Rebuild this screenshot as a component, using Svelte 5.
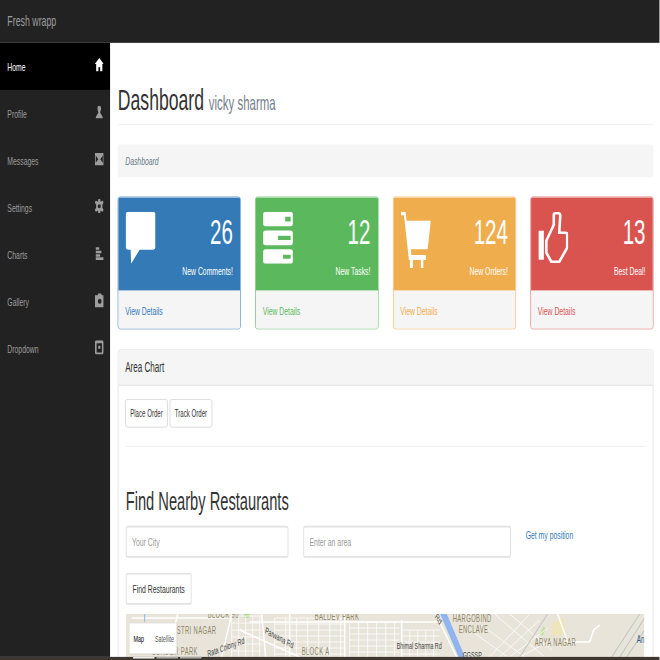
<script lang="ts">
  const nav = [
    { label: "Home", active: true, d: "M5 0 L10 6 H8.5 V13 H6 V9 H4 V13 H1.5 V6 H0 Z" },
    { label: "Profile", d: "M3 3 C3 0 7 0 7 3 C7 5 6.5 6 6 7 C6.5 9 9 10 9 13 H1 C1 10 3.5 9 4 7 C3.5 6 3 5 3 3 Z" },
    { label: "Messages", d: "M0 1 H10 V13 H0 Z M1 3.5 V10.5 L3.800 7 Z M9 3.5 L6.200 7 L9 10.500 Z" },
    { label: "Settings", d: "M4 0 H6 L6.5 2.5 L9 1.5 L10 3.5 L8.5 5.5 V8.5 L10 10.5 L9 12.5 L6.5 11.5 L6 14 H4 L3.5 11.5 L1 12.5 L0 10.5 L1.5 8.5 V5.5 L0 3.5 L1 1.5 L3.5 2.5 Z M5 5 A1.7 2 0 1 0 5 9 A1.7 2 0 1 0 5 5 Z" },
    { label: "Charts", d: "M1 1 H5 V3.5 H1 Z M1 4.5 H7.5 V7 H1 Z M1 8 H6 V10.5 H1 Z M1 11 H10 V13.5 H1 Z" },
    { label: "Gallery", d: "M3 2 L4 0 H7 L8 2 H10 V14 H0 V2 Z M5.5 5.5 A2 2.4 0 1 0 5.5 10.5 A2 2.4 0 1 0 5.5 5.5 Z" },
    { label: "Dropdown", d: "M2 0 H8 A2 2 0 0 1 10 2 V12 A2 2 0 0 1 8 14 H2 A2 2 0 0 1 0 12 V2 A2 2 0 0 1 2 0 Z M2 3 V12 H8 V3 Z M3.8 5.5 H6.2 V8.5 H3.8 Z" },
  ];

  const cards = [
    { tone: "blue", count: 26, text: "New Comments!" },
    { tone: "green", count: 12, text: "New Tasks!" },
    { tone: "yellow", count: 124, text: "New Orders!" },
    { tone: "red", count: 13, text: "Best Deal!" },
  ];

  // road grid, in screen px of the finished picture
  function grid(x0: number, x1: number, y0: number, y1: number, dx: number, dy: number) {
    let d = "";
    for (let x = x0; x <= x1; x += dx) d += `M${x} ${y0}V${y1}`;
    for (let y = y0; y <= y1; y += dy) d += `M${x0} ${y}H${x1}`;
    return d;
  }

  const thinRoads = [
    grid(232, 262, 616, 657, 7, 7),
    grid(275, 345, 618, 657, 11, 6),
    grid(350, 400, 622, 657, 9, 6),
    grid(402, 440, 630, 657, 8, 6),
    "M490 657L530 614M500 657L540 620M510 657L548 628M520 657L552 640M482 625L525 657M476 634L508 657M495 614L545 657M510 614L552 650",
  ].join("");

  const mainRoads = [
    "M132 618H230M178 614L168 657M232 614L222 657M262 614L266 657",
    "M240 630L300 657M290 614V657M345 614V657M402 620V657M250 622H440",
    "M436 614L457 657",
    "M558 614L568 642H590L594 630L600 625",
  ].join("");

  const labels = [
    { t: "BLOCK 90", x: 208, y: 618, cls: "place" },
    { t: "STRI NAGAR", x: 177, y: 634, cls: "place" },
    { t: "SUNDER PARK", x: 152, y: 655, cls: "place" },
    { t: "BALDEV PARK", x: 315, y: 620, cls: "place" },
    { t: "BLOCK A", x: 302, y: 655, cls: "place" },
    { t: "HARGOBIND", x: 453, y: 622, cls: "place" },
    { t: "ENCLAVE", x: 459, y: 633, cls: "place" },
    { t: "ARYA NAGAR", x: 535, y: 646, cls: "place" },
    { t: "Bhimal Sharma Rd", x: 397, y: 649, cls: "road" },
    { t: "Parwana Rd", x: 265, y: 633, rot: 18, cls: "road" },
    { t: "Rata Colony Rd", x: 208, y: 657, rot: -12, cls: "road" },
    { t: "Rd", x: 435, y: 617, rot: 45, cls: "road" },
    { t: "GGSSP", x: 463, y: 658, cls: "road" },
    { t: "Ana", x: 637, y: 643, cls: "transit" },
  ];
</script>

<div class="viewport">
  <div class="app">
    <header class="navbar">Fresh wrapp</header>

    <aside class="sidebar">
      {#each nav as item}
        <div class="nav-item" class:active={item.active}>
          <span>{item.label}</span>
          <svg class="nav-icon" viewBox="0 0 10 14" preserveAspectRatio="none">
            <path d={item.d} fill-rule="evenodd" fill="currentColor" />
          </svg>
        </div>
      {/each}
    </aside>

    <main class="wrapper">
      <div class="page-header">
        <h1>Dashboard <small>vicky sharma</small></h1>
      </div>
      <div class="breadcrumb">Dashboard</div>

      <div class="cards">
        {#each cards as card}
          <div class="card {card.tone}">
            <div class="card-body">
              {#if card.tone === "blue"}
                <svg class="card-icon" viewBox="0 0 30 52" preserveAspectRatio="none">
                  <path d="M3 0H27A3 3 0 0 1 30 3V35A3 3 0 0 1 27 38H14L5.5 52L5 38H3A3 3 0 0 1 0 35V3A3 3 0 0 1 3 0Z" />
                </svg>
              {:else if card.tone === "green"}
                <svg class="card-icon" viewBox="0 0 30 52" preserveAspectRatio="none">
                  <path
                    fill-rule="evenodd"
                    d="M2.5 0H27.5A2.5 2.5 0 0 1 30 2.500V12A2.500 2.500 0 0 1 27.500 14.500H2.500A2.500 2.500 0 0 1 0 12V2.500A2.500 2.500 0 0 1 2.500 0ZM22.300 5V9.700H27.700V5Z
                    M2.500 18.700H27.500A2.500 2.500 0 0 1 30 21.200V31A2.500 2.500 0 0 1 27.500 33.500H2.500A2.500 2.500 0 0 1 0 31V21.200A2.500 2.500 0 0 1 2.500 18.700ZM15 24V28.300H27.700V24Z
                    M2.500 37.500H27.500A2.500 2.500 0 0 1 30 40V49.500A2.500 2.500 0 0 1 27.500 52H2.500A2.500 2.500 0 0 1 0 49.500V40A2.500 2.500 0 0 1 2.500 37.500ZM20 43V47H27.700V43Z"
                  />
                </svg>
              {:else if card.tone === "yellow"}
                <svg class="card-icon cart" viewBox="0 0 30 56" preserveAspectRatio="none">
                  <path d="M0 0H4.500L5.800 9H30L26.800 37.500H10L10.500 43H25V48H22.500V56H20V48H12V56H9V48H8L3 3.500H0Z" />
                </svg>
              {:else}
                <svg class="card-icon" viewBox="0 0 30 52" preserveAspectRatio="none">
                  <path d="M0 19H5.500V48H0Z" />
                  <path
                    class="outline"
                    d="M8 29L15.500 13V3Q15.500 1.500 17 1.500H20Q22 1.500 22 4L21 21H27Q29 21 29 23V36L21 50H13L8 41Z"
                  />
                </svg>
              {/if}
              <div class="card-figures">
                <div class="huge">{card.count}</div>
                <div>{card.text}</div>
              </div>
            </div>
            <div class="card-footer">View Details</div>
          </div>
        {/each}
      </div>

      <section class="panel">
        <div class="panel-heading">Area Chart</div>
        <div class="panel-body">
          <div class="actions">
            <button>Place Order</button>
            <button>Track Order</button>
          </div>
          <hr />
          <h2>Find Nearby Restaurants</h2>
          <div class="search">
            <input placeholder="Your City" />
            <input placeholder="Enter an area" />
            <a href="#position">Get my position</a>
          </div>
          <button class="find">Find Restaurants</button>

          <div class="map">
            <svg viewBox="0 0 1061 51" preserveAspectRatio="none">
              <rect width="1061" height="51" fill="#e8e4d9" />
              <g transform="scale(2.045 1.19) translate(-126 -614)">
                <path d="M553 622L565 617L566 635L551 636Z" fill="#efe5bd" />
                <path d="M540 634L544 626L546 629L543 636Z" fill="#c5e0a0" />
                <path d="M244 614L250 614L249 618L245 618Z" fill="#b5d88f" />
                <path d={thinRoads} class="thin" />
                <path d={mainRoads} class="main" />
                <path d="M620 657L645 618M627 657L645 630M612 657L640 614" class="rail" />
                <path d="M520 657L548 614" class="rail" />
                <path d="M145 614V622" class="water thin-water" />
                <path d="M443 612L463 659" class="water" />
              </g>
              {#each labels as l}
                <text
                  class={l.cls}
                  transform="translate({(l.x - 126) * 2.045} {(l.y - 614) * 1.19}) rotate({l.rot ?? 0})"
                >{l.t}</text>
              {/each}
            </svg>
            <div class="map-type">
              <span class="on">Map</span>
              <span>Satellite</span>
            </div>
          </div>
        </div>
      </section>
    </main>

    <footer class="taskbar">
      <i class="white"></i><i></i><i></i>
    </footer>
  </div>
</div>

<style>
  :global(html),
  :global(body) {
    overflow: hidden;
    background: #fff;
  }

  .viewport {
    width: 660px;
    height: 660px;
    overflow: hidden;
  }

  .app {
    width: 1349px;
    height: 786px;
    transform: scale(0.489, 0.84);
    transform-origin: 0 0;
    overflow: hidden;
    display: grid;
    grid-template-columns: 225px 1fr;
    grid-template-rows: 51px 1fr 4px;
    font-family: "Liberation Sans", Arial, sans-serif;
    font-size: 14px;
    line-height: 20px;
    color: #333;
    background: #fff;
  }

  .navbar {
    grid-column: 1 / 3;
    background: #222;
    color: #9d9d9d;
    font-size: 18px;
    padding: 15px;
  }

  .sidebar {
    background: #222;
    color: #9d9d9d;
    min-height: 0;
    overflow: hidden;
  }

  .nav-item {
    height: 56px;
    padding: 0 13px 0 15px;
    display: flex;
    align-items: center;
    justify-content: space-between;
  }

  .nav-item.active {
    background: #000;
    color: #fff;
  }

  .nav-icon {
    width: 18px;
    height: 17px;
    margin-top: -4px;
  }

  .wrapper {
    min-height: 0;
    overflow: hidden;
    padding: 0 13px 0 15px;
    border-left: 1px solid #e7e7e7;
  }

  .page-header {
    margin-top: 48px;
    padding-bottom: 9px;
    border-bottom: 1px solid #eee;
  }

  h1,
  h2 {
    margin: 0;
    font-weight: 500;
    line-height: 1.1;
    color: #333;
  }

  h1 {
    font-size: 36px;
  }

  h1 small {
    font-size: 65%;
    font-weight: 400;
    color: #74808c;
  }

  .breadcrumb {
    margin-top: 23px;
    height: 39px;
    box-sizing: border-box;
    padding: 10px 15px;
    background: #f5f5f5;
    border-radius: 4px;
    color: #6a7a8a;
    font-style: italic;
  }

  .cards {
    margin-top: 23px;
    display: grid;
    grid-template-columns: repeat(4, 1fr);
    gap: 30px;
  }

  .card {
    height: 158px;
    box-sizing: border-box;
    border: 1px solid var(--tone);
    border-radius: 4px;
    overflow: hidden;
    display: flex;
    flex-direction: column;
  }

  .blue {
    --tone: #337ab7;
  }
  .green {
    --tone: #5cb85c;
  }
  .yellow {
    --tone: #f0ad4e;
  }
  .red {
    --tone: #d9534f;
  }

  .card-body {
    height: 111px;
    flex: none;
    background: var(--tone);
    color: #fff;
    padding: 12px 15px;
    display: flex;
    justify-content: space-between;
    box-sizing: border-box;
  }

  .card-icon {
    width: 61px;
    height: 62px;
    flex: none;
    margin-top: 5px;
    fill: #fff;
  }

  .card-icon.cart {
    height: 67px;
  }

  .outline {
    fill: none;
    stroke: #fff;
    stroke-width: 2.6;
  }

  .card-figures {
    text-align: right;
  }

  .huge {
    font-size: 42px;
    line-height: 44px;
    margin: 8px 0 13px;
  }

  .card-footer {
    flex: 1;
    background: #f5f5f5;
    color: var(--tone);
    padding: 14px 14px;
  }

  .panel {
    margin-top: 24px;
    border: 1px solid #ddd;
    border-radius: 4px;
    height: 400px;
    overflow: hidden;
  }

  .panel-heading {
    height: 42px;
    padding: 10px 14px;
    box-sizing: border-box;
    background: #f5f5f5;
    border-bottom: 1px solid #ddd;
    font-size: 16.5px;
  }

  .panel-body {
    padding: 16px 15px 0;
  }

  .actions {
    display: flex;
    gap: 4px;
    margin-left: -1px;
  }

  button {
    font: inherit;
    font-size: 12.5px;
    color: #333;
    background: #fff;
    border: 1px solid #ccc;
    border-radius: 4px;
    height: 34px;
    width: 87px;
    padding: 0;
  }

  hr {
    margin: 22px 0 0;
    border: 0;
    border-top: 1px solid #eee;
  }

  h2 {
    margin-top: 48px;
    font-size: 30px;
    font-weight: 500;
  }

  .search {
    margin-top: 13px;
    display: grid;
    grid-template-columns: 333px 425px auto;
    gap: 30px;
    align-items: start;
  }

  input {
    font: inherit;
    height: 38px;
    width: 100%;
    box-sizing: border-box;
    padding: 0 11px;
    border: 2px solid #e2e2e2;
    border-radius: 4px;
    background: #fff;
  }

  input::placeholder {
    color: #999;
  }

  a {
    color: #337ab7;
    text-decoration: none;
    padding-top: 1px;
  }

  .find {
    display: block;
    margin-top: 18px;
    height: 38px;
    width: 135px;
    padding: 0;
    border: 2px solid #e2e2e2;
    font-size: 14px;
  }

  .map {
    position: relative;
    margin-top: 11px;
    height: 51px;
    width: 1061px;
    overflow: hidden;
  }

  .map svg {
    display: block;
    width: 100%;
    height: 100%;
  }

  .thin {
    fill: none;
    stroke: #fff;
    stroke-width: 0.9;
    opacity: 0.85;
  }

  .main {
    fill: none;
    stroke: #fff;
    stroke-width: 1.5;
  }

  .rail {
    fill: none;
    stroke: #c4c4c2;
    stroke-width: 1;
  }

  .water {
    fill: none;
    stroke: #8fb4f0;
    stroke-width: 6;
  }

  .thin-water {
    stroke-width: 1;
  }

  text {
    font-size: 11px;
    font-family: "Liberation Sans", Arial, sans-serif;
  }

  .place {
    fill: #8f8566;
    font-size: 12px;
    letter-spacing: 0.8px;
  }

  .road {
    fill: #444;
  }

  .transit {
    fill: #27628c;
    font-size: 13px;
  }

  .map-type {
    position: absolute;
    left: 8px;
    top: 11px;
    width: 96px;
    height: 36px;
    background: #fff;
    box-shadow: 0 0 2px #ccc;
    display: flex;
    align-items: center;
    justify-content: space-between;
    padding: 0 5px 0 8px;
    box-sizing: border-box;
    font-size: 11px;
    color: #565656;
  }

  .map-type .on {
    color: #000;
  }

  .taskbar {
    grid-column: 1 / 3;
    background: #3e3730;
    display: flex;
    gap: 4px;
    padding-left: 272px;
    position: relative;
  }

  .taskbar i {
    width: 44px;
    height: 2px;
    background: #aaa;
  }

  .taskbar i.white {
    background: #eee;
  }
</style>
